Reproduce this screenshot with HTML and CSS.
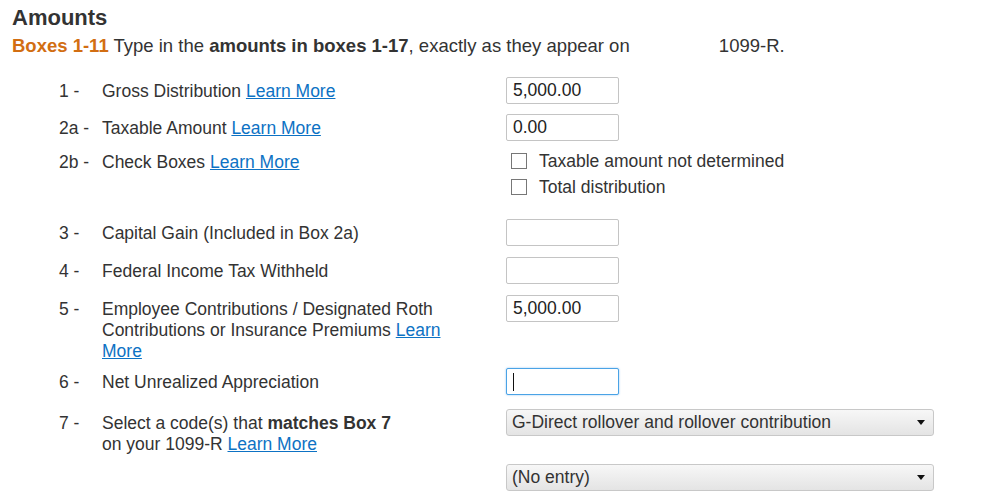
FILE: index.html
```html
<!DOCTYPE html>
<html>
<head>
<meta charset="utf-8">
<link rel="stylesheet" href="styles.css">
</head>
<body>
<div class="page">
  <h1 class="title">Amounts</h1>
  <p class="intro"><span class="boxes">Boxes 1-11</span> Type in the <b>amounts in boxes 1-17</b>, exactly as they appear on <span class="payer"></span>1099-R.</p>

  <div class="form">
    <div class="row r1">
      <div class="num">1 -</div>
      <div class="label">Gross Distribution <a href="#">Learn More</a></div>
      <div class="ctrl"><input class="amt" type="text" value="5,000.00"></div>
    </div>
    <div class="row r2a">
      <div class="num">2a -</div>
      <div class="label">Taxable Amount <a href="#">Learn More</a></div>
      <div class="ctrl"><input class="amt" type="text" value="0.00"></div>
    </div>
    <div class="row r2b">
      <div class="num">2b -</div>
      <div class="label">Check Boxes <a href="#">Learn More</a></div>
      <div class="ctrl checks">
        <label class="check"><span class="box"></span>Taxable amount not determined</label>
        <label class="check"><span class="box"></span>Total distribution</label>
      </div>
    </div>
    <div class="row r3">
      <div class="num">3 -</div>
      <div class="label">Capital Gain (Included in Box 2a)</div>
      <div class="ctrl"><input class="amt" type="text" value=""></div>
    </div>
    <div class="row r4">
      <div class="num">4 -</div>
      <div class="label">Federal Income Tax Withheld</div>
      <div class="ctrl"><input class="amt" type="text" value=""></div>
    </div>
    <div class="row r5">
      <div class="num">5 -</div>
      <div class="label">Employee Contributions / Designated Roth Contributions or Insurance Premiums <a href="#">Learn More</a></div>
      <div class="ctrl"><input class="amt" type="text" value="5,000.00"></div>
    </div>
    <div class="row r6">
      <div class="num">6 -</div>
      <div class="label">Net Unrealized Appreciation</div>
      <div class="ctrl"><div class="amt focus"><span class="caret"></span></div></div>
    </div>
    <div class="row r7">
      <div class="num">7 -</div>
      <div class="label">Select a code(s) that <b>matches Box 7</b><br>on your 1099-R <a href="#">Learn More</a></div>
      <div class="ctrl"><div class="select"><span>G-Direct rollover and rollover contribution</span><span class="arrow"></span></div></div>
    </div>
    <div class="row r8">
      <div class="num"></div>
      <div class="label"></div>
      <div class="ctrl"><div class="select"><span>(No entry)</span><span class="arrow"></span></div></div>
    </div>
  </div>
</div>
</body>
</html>
```

FILE: styles.css
```css
html, body {
  margin: 0;
  padding: 0;
  background: #ffffff;
}
.page {
  font-family: "Liberation Sans", Arial, sans-serif;
  color: #333333;
  font-size: 17.5px;
  padding: 6px 0 0 12px;
}
.title {
  margin: 0;
  font-size: 22px;
  line-height: 24px;
  font-weight: bold;
  color: #333333;
}
.intro {
  margin: 5px 0 0 0;
  font-size: 18.5px;
  line-height: 22px;
}
.boxes {
  color: #d26e12;
  font-weight: bold;
}
.payer {
  display: inline-block;
  width: 84px;
}
.form {
  margin-top: 20px;
  padding-left: 47px;
}
.row {
  display: flex;
  align-items: flex-start;
}
.num {
  width: 43px;
  flex: none;
  line-height: 21px;
  padding-top: 4px;
}
.label {
  width: 350px;
  flex: none;
  margin-right: 54px;
  line-height: 21px;
  padding-top: 4px;
}
.label a {
  color: #0d72c4;
  text-decoration: underline;
}
.ctrl {
  flex: none;
}
.amt {
  box-sizing: border-box;
  width: 113px;
  height: 27px;
  border: 1px solid #c4c4c4;
  border-radius: 2px;
  padding: 0 6px;
  font-family: "Liberation Sans", Arial, sans-serif;
  font-size: 17.5px;
  color: #222222;
  margin: 0;
  display: block;
  background: #fff;
}
.amt.focus {
  border: 1px solid #4aa3e6;
  box-shadow: 0 0 2px rgba(60, 150, 230, 0.6);
  display: flex;
  align-items: center;
}
.caret {
  width: 1px;
  height: 18px;
  background: #111;
}
.r1 { margin-bottom: 10px; }
.r2a { margin-bottom: 7px; }
.r2b { margin-bottom: 19px; }
.r3 { margin-bottom: 11px; }
.r4 { margin-bottom: 11px; }
.r5 { margin-bottom: 6px; }
.r6 { margin-bottom: 14px; }
.r7 { margin-bottom: 9px; }
.checks {
  display: flex;
  flex-direction: column;
}
.check {
  display: flex;
  align-items: center;
  height: 26px;
  padding-left: 5px;
}
.box {
  box-sizing: border-box;
  width: 16px;
  height: 16px;
  border: 1px solid #777777;
  background: #fff;
  margin-right: 12px;
}
.select {
  box-sizing: border-box;
  width: 428px;
  height: 27px;
  border: 1px solid #c8c8c8;
  border-radius: 3px;
  background: linear-gradient(#f7f7f7, #e4e4e4);
  display: flex;
  align-items: center;
  justify-content: space-between;
  padding: 0 8px 0 5px;
  color: #333333;
}
.arrow {
  width: 0;
  height: 0;
  border-left: 4px solid transparent;
  border-right: 4px solid transparent;
  border-top: 5px solid #111;
}
```
